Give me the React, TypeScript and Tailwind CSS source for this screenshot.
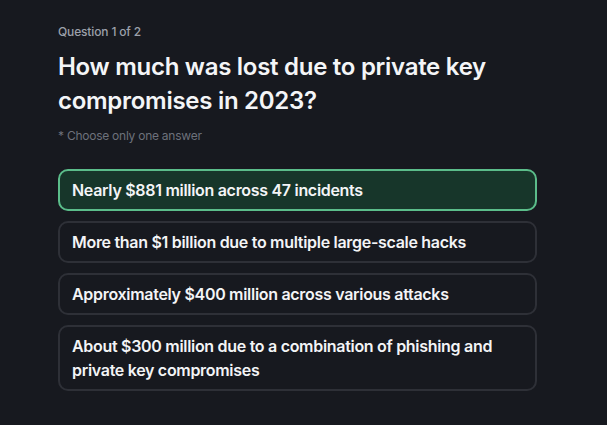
import React from "react";

const options = [
  "Nearly $881 million across 47 incidents",
  "More than $1 billion due to multiple large-scale hacks",
  "Approximately $400 million across various attacks",
  "About $300 million due to a combination of phishing and private key compromises",
];

export default function App() {
  return (
    <div
      className="min-h-[425px] w-full bg-[#17191f] pl-[58px] pt-[24px] pb-[30px] text-white"
      style={{ fontFamily: "Inter, 'Noto Sans', sans-serif" }}
    >
      <div className="w-[479px]">
        <div className="text-[12px] leading-[16px] font-medium tracking-[-0.15px] text-[#9ca0aa]">Question 1 of 2</div>
        <h1 className="mt-[10px] text-[24px] leading-[34px] font-semibold tracking-[-0.28px] text-[#f4f5f7] pr-[20px]">
          How much was lost due to private key compromises in 2023?
        </h1>
        <div className="mt-[10px] text-[12px] leading-[16px] tracking-[-0.25px] text-[#6d717b]">* Choose only one answer</div>
        <div className="mt-[25px] flex flex-col gap-[10px]">
          {options.map((o, i) => (
            <div
              key={i}
              className={
                i === 0
                  ? "rounded-[10px] border-2 border-[#5bbd8a] bg-[#17362a] px-[12px] py-[7px] text-[16px] leading-[24px] font-semibold tracking-[-0.3px] text-[#f3f4f6]"
                  : "rounded-[10px] border-2 border-[#2e3037] bg-[#17191f] px-[12px] py-[7px] pr-[20px] text-[16px] leading-[24px] font-semibold tracking-[-0.3px] text-[#f3f4f6]"
              }
            >
              {o}
            </div>
          ))}
        </div>
      </div>
    </div>
  );
}
